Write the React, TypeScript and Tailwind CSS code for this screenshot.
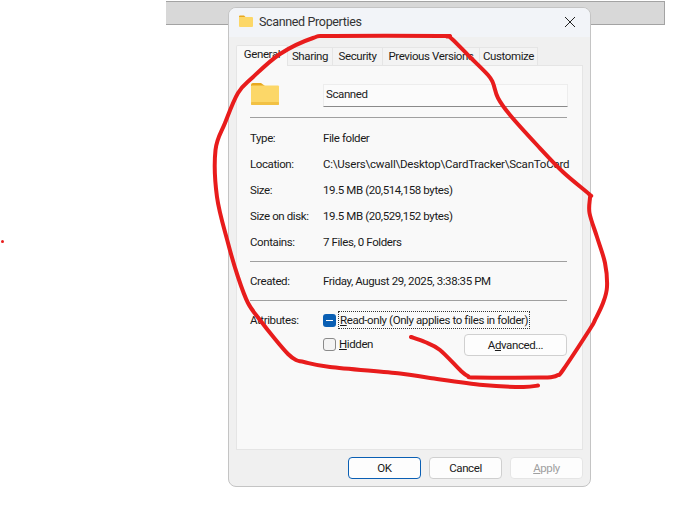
const font = { fontFamily: 'Roboto, sans-serif' };

type P = [number, number];
const stroke: P[] = [
  [538, 385.5], [523, 387], [483, 385], [430, 378], [400, 373.5], [330, 367], [304, 362], [296, 360], [288, 354], [275, 339], [260, 320], [248, 303],
  [238, 277], [228, 243], [217, 197], [215.5, 150], [225, 123], [238, 93], [252, 78], [280, 54], [313, 38], [333, 36], [440, 36], [447, 36.5], [452, 39], [470, 57], [488, 75], [493, 83], [498, 98],
  [510, 115], [537, 145], [563, 172], [589, 194], [590, 197], [589.5, 213], [597, 237], [605, 263], [607, 287], [603, 303], [595, 320], [590, 329], [563, 370], [558, 375], [552, 377], [540, 377.5], [476, 377.5], [468, 376], [461, 371], [440, 350], [425, 342], [411, 337],
];

function smooth(pts: P[]) {
  let d = `M${pts[0][0]} ${pts[0][1]}`;
  for (let i = 0; i < pts.length - 1; i++) {
    const p0 = pts[Math.max(i - 1, 0)];
    const p1 = pts[i];
    const p2 = pts[i + 1];
    const p3 = pts[Math.min(i + 2, pts.length - 1)];
    const c1: P = [p1[0] + (p2[0] - p0[0]) / 6, p1[1] + (p2[1] - p0[1]) / 6];
    const c2: P = [p2[0] - (p3[0] - p1[0]) / 6, p2[1] - (p3[1] - p1[1]) / 6];
    d += ` C${c1[0]} ${c1[1]} ${c2[0]} ${c2[1]} ${p2[0]} ${p2[1]}`;
  }
  return d;
}

function Row({ label, value, valueClass = "" }: { label: string; value: string; valueClass?: string }) {
  return (
    <div className="flex items-center h-[26px]">
      <div className="w-[73px] shrink-0">{label}</div>
      <div className={`min-w-0 w-[246px] whitespace-nowrap ${valueClass}`}>{value}</div>
    </div>
  );
}

function Tab({ label, w, active }: { label: string; w: string; active?: boolean }) {
  return active ? (
    <div className={`${w} h-[21px] -mb-px z-10 flex items-center justify-center pb-[5px] border border-b-0 border-[#e5e5e5] bg-[#f9f9f9] rounded-t-[2px]`}>{label}</div>
  ) : (
    <div className={`${w} h-[18px] flex items-center justify-center pb-[2px] border border-b-0 border-l-0 border-[#e5e5e5] bg-[#f3f3f3]`}>{label}</div>
  );
}

function Btn({ children, className = "" }: { children: React.ReactNode; className?: string }) {
  return (
    <div className={`h-[22px] flex items-center justify-center rounded-[4px] border bg-[#fdfdfd] ${className}`}>{children}</div>
  );
}

export default function App() {
  return (
    <div className="relative w-[684px] h-[516px] bg-white overflow-hidden text-[11.5px] leading-[16px] text-[#1a1a1a] tracking-[-0.4px]" style={font}>
      <div className="absolute left-[166px] top-[1px] w-[499px] h-[24px] bg-[#d8d8d8] border-t border-r border-b border-[#a3a3a3]" />
      <div className="absolute left-[1px] top-[240px] w-[3px] h-[3px] rounded-full bg-[#e81c1c]" />

      <div className="absolute left-[228px] top-[7px] w-[363px] h-[480px] flex flex-col rounded-[8px] border border-[#c4c4c4] bg-[#f0f0f0] overflow-hidden">
        <div className="h-[29px] shrink-0 flex items-center pl-[9px] pr-[14px] bg-[#f2f4f8]">
          <svg width="16" height="14" viewBox="0 0 16 14" className="mr-[5px] -mt-[3px]">
            <path d="M1 2.5a1 1 0 0 1 1-1h4l2 2H1z" fill="#e8a820" />
            <rect x="1" y="3" width="14" height="10" rx="1" fill="#fcd768" />
          </svg>
          <span className="flex-1 text-[12.5px] tracking-[-0.35px] text-[#333] -mt-px">Scanned Properties</span>
          <svg width="12" height="12" viewBox="0 0 12 12" className="-mt-[1px]">
            <path d="M1 1l10 10M11 1L1 11" stroke="#222" strokeWidth="1" fill="none" />
          </svg>
        </div>

        <div className="flex items-end h-[28px] shrink-0 pl-[7px]">
          <Tab label="General" w="w-[52px]" active />
          <Tab label="Sharing" w="w-[45px]" />
          <Tab label="Security" w="w-[50px]" />
          <Tab label="Previous Versions" w="w-[97px]" />
          <Tab label="Customize" w="w-[58px]" />
        </div>

        <div className="mx-[7px] w-[347px] h-[385px] shrink-0 border border-[#e5e5e5] bg-[#f9f9f9] pl-[13px] pt-[16px] flex flex-col">
          <div className="flex items-center h-[26px]">
            <svg width="30" height="24" viewBox="0 0 30 24" className="shrink-0 -mt-[2px]">
              <path d="M1 3a2 2 0 0 1 2-2h8l4 3H1z" fill="#e8a820" />
              <rect x="1" y="3.5" width="28" height="19.5" rx="1" fill="#fcd768" />
              <rect x="1" y="20" width="28" height="3" rx="1" fill="#f2c144" />
            </svg>
            <div className="ml-[43px] w-[245px] h-[23px] flex items-center px-[2px] pb-[2px] bg-[#fbfbfb] border border-[#ededed] border-b-[#8a8a8a] text-[#222]">Scanned</div>
          </div>
          <div className="mt-[9px] mb-[7px] w-[317px] h-px bg-[#a0a0a0]" />
          <Row label="Type:" value="File folder" />
          <Row label="Location:" value="C:\Users\cwall\Desktop\CardTracker\ScanToCard" valueClass="tracking-[-0.22px]" />
          <Row label="Size:" value="19.5 MB (20,514,158 bytes)" />
          <Row label="Size on disk:" value="19.5 MB (20,529,152 bytes)" />
          <Row label="Contains:" value="7 Files, 0 Folders" />
          <div className="mt-[6px] mb-[6px] w-[317px] h-px bg-[#a0a0a0]" />
          <Row label="Created:" value="Friday, August 29, 2025, 3:38:35 PM" />
          <div className="mt-[6px] mb-[6px] w-[317px] h-px bg-[#a0a0a0]" />
          <div className="flex items-center h-[26px]">
            <div className="w-[73px] shrink-0">Attributes:</div>
            <div className="w-[13px] h-[13px] rounded-[3px] bg-[#0a5fb4] flex items-center justify-center">
              <div className="w-[7px] h-px bg-white" />
            </div>
            <div className="ml-[2px] pl-[1px] pr-px border border-dotted border-[#333]">
              <span><u>R</u>ead-only (Only applies to files in folder)</span>
            </div>
          </div>
          <div className="flex items-center h-[22px] mt-px">
            <div className="ml-[73px] w-[13px] h-[13px] rounded-[3px] border border-[#8a8a8a] bg-[#f4f4f4] -mt-[2px]" />
            <span className="ml-[3px] -mt-[2px]"><u>H</u>idden</span>
            <Btn className="ml-auto mr-[15px] w-[103px] border-[#d0d0d0]">A<u>d</u>vanced...</Btn>
          </div>
        </div>

        <div className="flex justify-end gap-[8px] pr-[7px] pt-[7px]">
          <Btn className="w-[73px] border-[#0a5fb4]">OK</Btn>
          <Btn className="w-[73px] border-[#cfcfcf]">Cancel</Btn>
          <Btn className="w-[73px] border-[#e5e5e5] bg-[#f5f5f5] text-[#a0a0a0]"><span><u>A</u>pply</span></Btn>
        </div>
      </div>

      <svg className="absolute left-0 top-0 z-20 pointer-events-none" width="684" height="516" viewBox="0 0 684 516" fill="none">
        <path d={smooth(stroke)} stroke="#e81c1c" strokeWidth="4" strokeLinejoin="round" strokeLinecap="round" />
      </svg>
    </div>
  );
}
